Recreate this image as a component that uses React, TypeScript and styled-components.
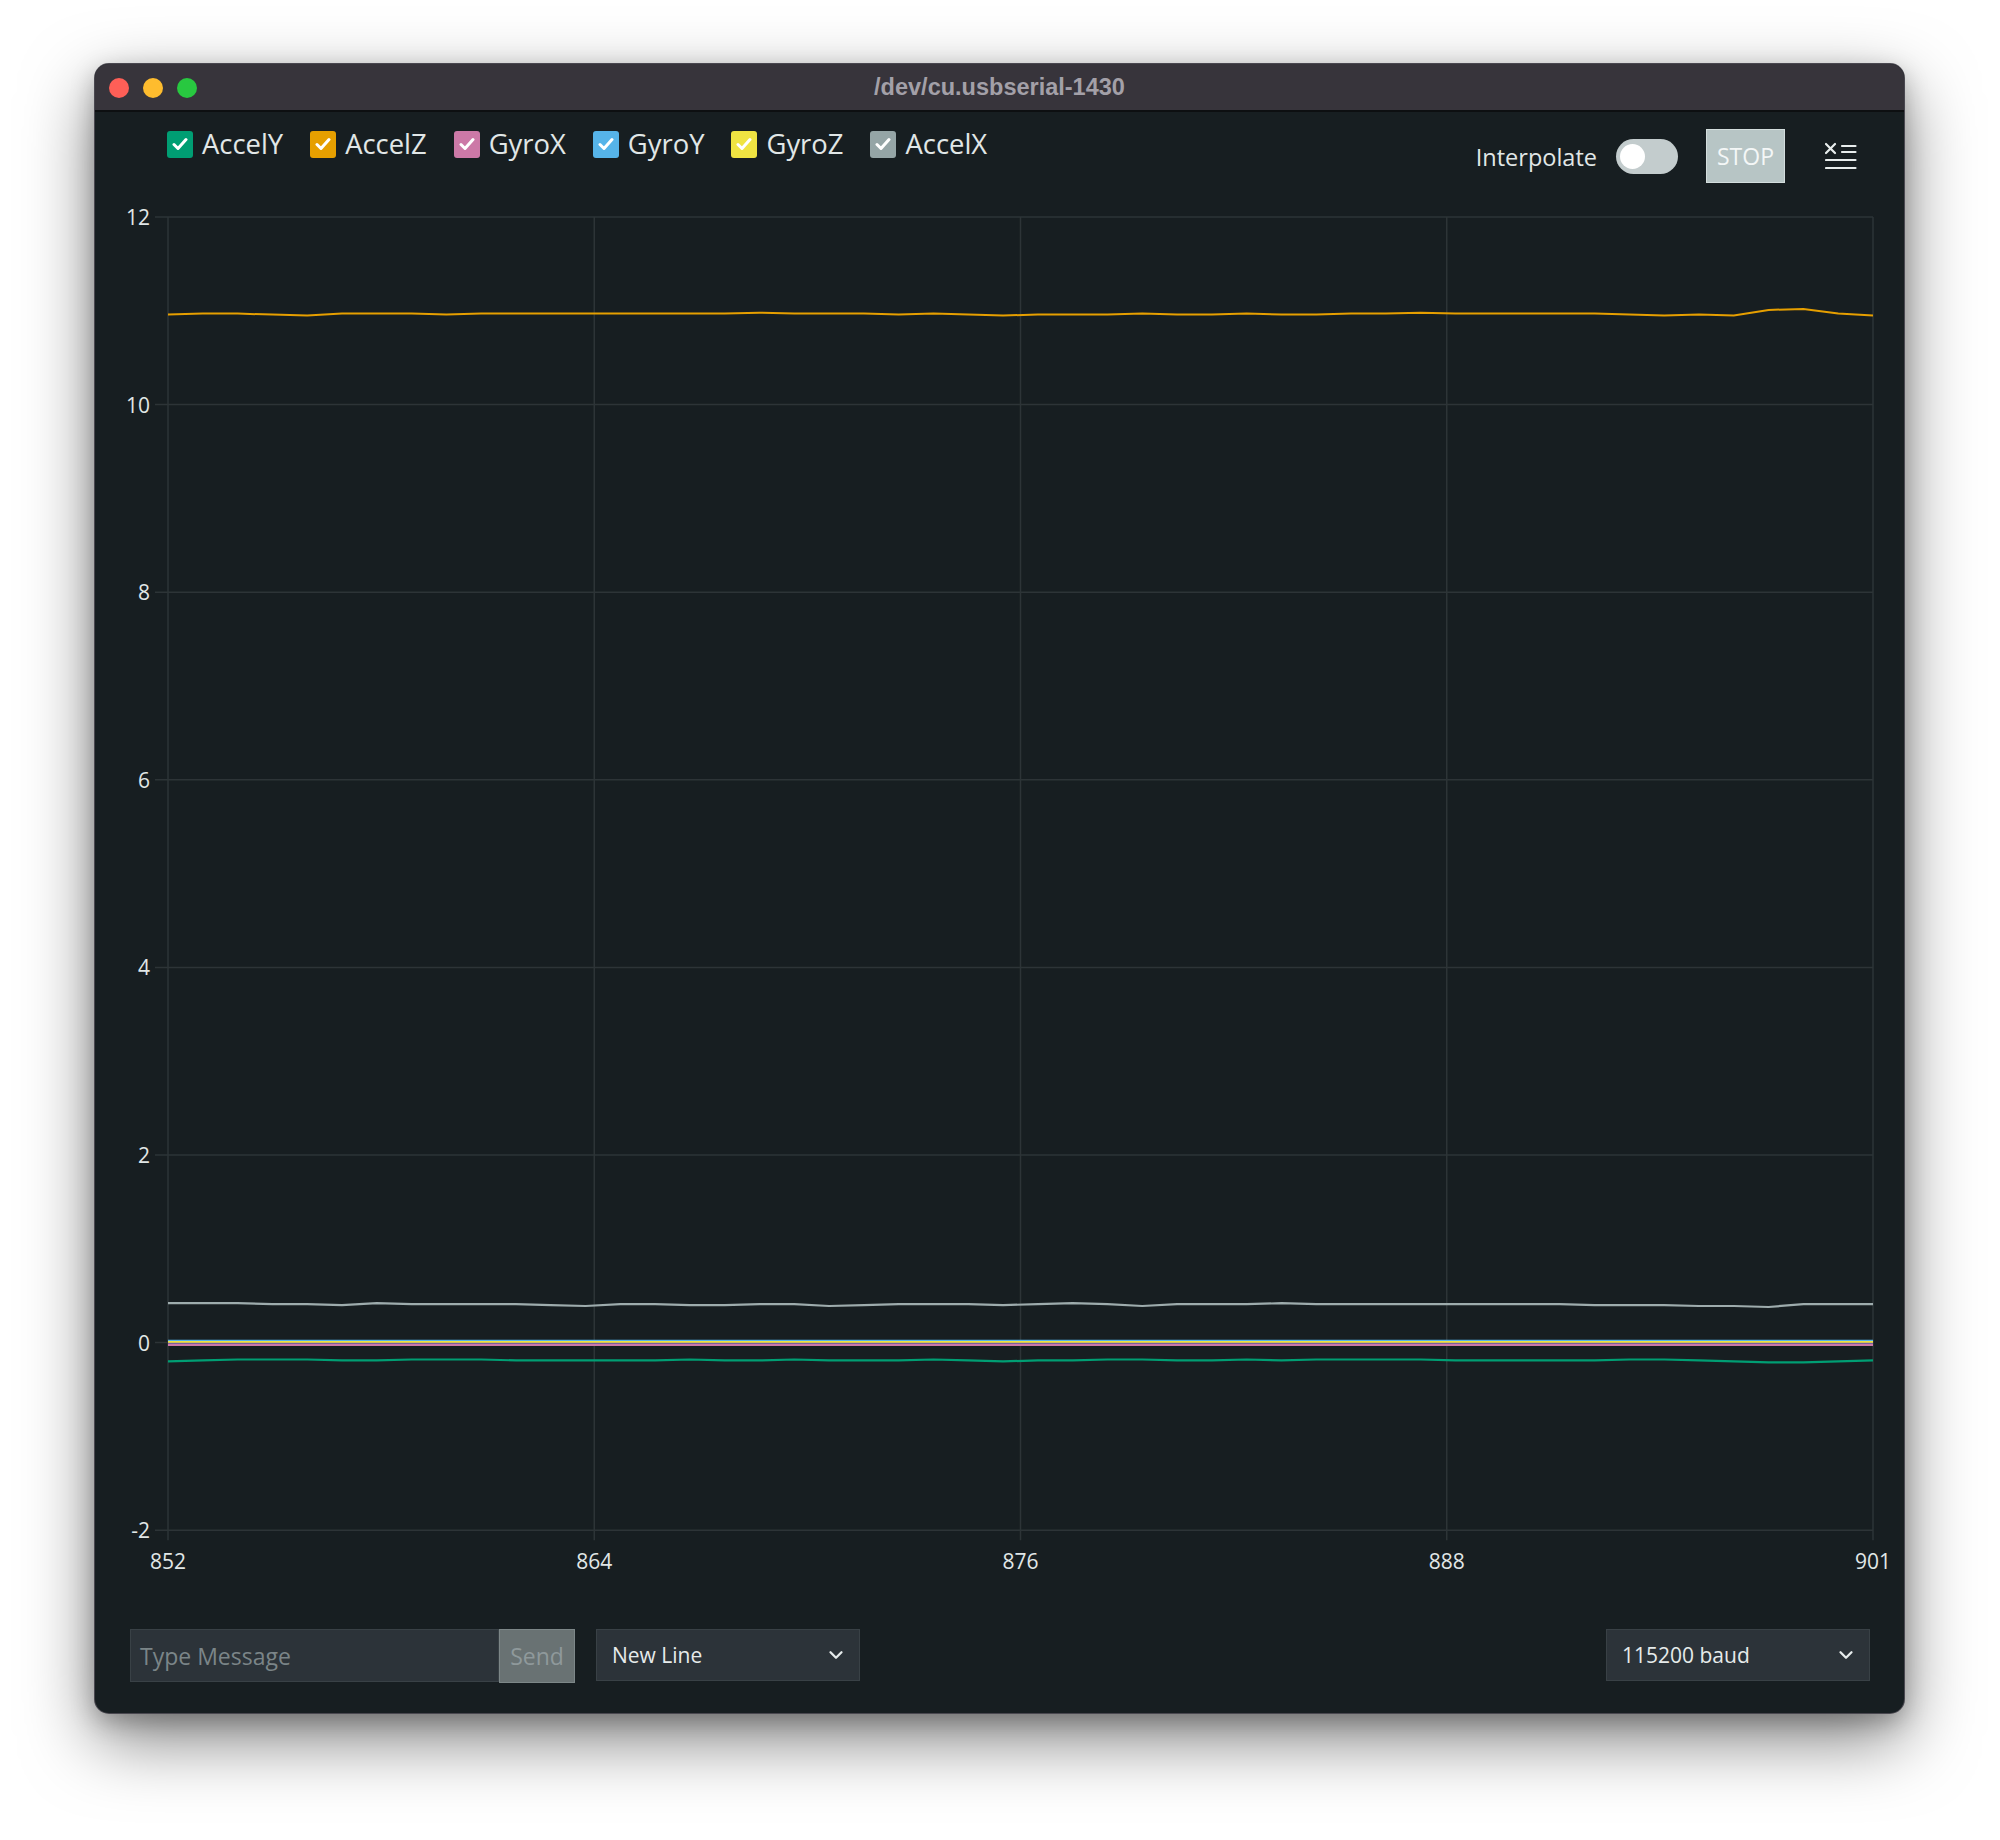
import React from "react";
import styled, { createGlobalStyle } from "styled-components";
import { ChevronDown } from "lucide-react";

const GlobalStyle = createGlobalStyle`
  html, body {
    margin: 0;
    padding: 0;
    background: #ffffff;
  }
  body {
    width: 2000px;
    height: 1840px;
    overflow: hidden;
    font-family: "Open Sans", "Noto Sans", sans-serif;
  }
`;

const Page = styled.div`
  padding: 64px 0 0 95px;
`;

const Window = styled.div`
  width: 1809px;
  height: 1649px;
  border-radius: 14px;
  overflow: hidden;
  display: flex;
  flex-direction: column;
  background: #171e21;
  box-shadow: 0 0 0 1px #4a4850, 0 26px 70px rgba(0, 0, 0, 0.5),
    0 8px 24px rgba(0, 0, 0, 0.25);
`;

const TitleBar = styled.div`
  position: relative;
  height: 46px;
  flex-shrink: 0;
  display: flex;
  align-items: center;
  justify-content: center;
  background: #37343b;
  border-bottom: 2px solid #0d0f11;
`;

const Lights = styled.div`
  position: absolute;
  left: 14px;
  top: 14px;
  display: flex;
  gap: 14px;
`;

const Light = styled.span<{ $color: string }>`
  width: 20px;
  height: 20px;
  border-radius: 50%;
  background: ${(p) => p.$color};
`;

const Title = styled.div`
  font-family: "Liberation Sans", Arial, sans-serif;
  font-weight: 700;
  font-size: 23.5px;
  color: #a3a0a8;
`;

const Header = styled.div`
  height: 88px;
  flex-shrink: 0;
  display: flex;
  justify-content: space-between;
  align-items: flex-start;
  padding: 0 47px 0 72px;
`;

const Legend = styled.div`
  display: flex;
  gap: 27px;
  margin-top: 17px;
`;

const LegendItem = styled.label`
  display: flex;
  align-items: center;
  gap: 9px;
  font-size: 27.4px;
  color: #e1e7e7;
  line-height: 30px;
`;

const Box = styled.span<{ $color: string }>`
  width: 26px;
  height: 27px;
  border-radius: 3px;
  background: ${(p) => p.$color};
  display: flex;
  align-items: center;
  justify-content: center;
`;

const Controls = styled.div`
  display: flex;
  align-items: center;
  margin-top: 17px;
`;

const ControlLabel = styled.span`
  font-size: 23.5px;
  color: #e1e7e7;
  margin-right: 19px;
  padding-top: 2px;
`;

const Toggle = styled.span`
  width: 62px;
  height: 35px;
  border-radius: 18px;
  background: #c3cccd;
  display: flex;
  align-items: center;
  padding-left: 4px;
  box-sizing: border-box;
  margin-right: 28px;
`;

const Knob = styled.span`
  width: 25px;
  height: 25px;
  border-radius: 50%;
  background: #ffffff;
`;

const StopButton = styled.button`
  width: 79px;
  height: 54px;
  border: 1px solid #d3dddd;
  background: #b7c5c5;
  color: #f4f7f7;
  font-family: "Open Sans", sans-serif;
  font-size: 23px;
  padding: 0;
  margin-right: 40px;
`;

const ChartWrap = styled.div`
  height: 1400px;
  flex-shrink: 0;
`;

const Footer = styled.div`
  flex: 1;
  display: flex;
  align-items: flex-start;
  padding: 29px 34px 0 35px;
`;

const MessageInput = styled.div`
  width: 369px;
  height: 53px;
  box-sizing: border-box;
  background: #2c3339;
  border: 1px solid #394146;
  display: flex;
  align-items: center;
  padding-left: 9px;
  font-size: 23px;
  color: #7b8588;
`;

const SendButton = styled.div`
  width: 76px;
  height: 54px;
  box-sizing: border-box;
  background: #697273;
  border: 1px solid #7d8788;
  display: flex;
  align-items: center;
  justify-content: center;
  font-size: 23px;
  color: #8f999b;
  margin-right: 21px;
`;

const Select = styled.div<{ $push?: boolean }>`
  width: 264px;
  height: 52px;
  box-sizing: border-box;
  background: #2c3339;
  border: 1px solid #394146;
  display: flex;
  align-items: center;
  justify-content: space-between;
  padding: 0 12px 0 15px;
  font-size: 21px;
  color: #e6ebeb;
  margin-left: ${(p) => (p.$push ? "auto" : "0")};
`;

const series = [
  { name: "AccelY", color: "#009e73" },
  { name: "AccelZ", color: "#e69f00" },
  { name: "GyroX", color: "#cc79a7" },
  { name: "GyroY", color: "#56b4e9" },
  { name: "GyroZ", color: "#f0e442" },
  { name: "AccelX", color: "#95a5a6" },
];

// plot geometry (svg coordinates, origin at window left / chart top)
const L = 73;
const R = 1778;
const T = 17;
const STEP = 187.6;
const yOf = (v: number) => T + (12 - v) * (STEP / 2);

const accelZ = [
  10.96, 10.97, 10.97, 10.96, 10.95, 10.97, 10.97, 10.97, 10.96, 10.97,
  10.97, 10.97, 10.97, 10.97, 10.97, 10.97, 10.97, 10.98, 10.97, 10.97,
  10.97, 10.96, 10.97, 10.96, 10.95, 10.96, 10.96, 10.96, 10.97, 10.96,
  10.96, 10.97, 10.96, 10.96, 10.97, 10.97, 10.98, 10.97, 10.97, 10.97,
  10.97, 10.97, 10.96, 10.95, 10.96, 10.95, 11.01, 11.02, 10.97, 10.95,
];
const accelX = [
  0.42, 0.42, 0.42, 0.41, 0.41, 0.4, 0.42, 0.41, 0.41, 0.41,
  0.41, 0.4, 0.39, 0.41, 0.41, 0.4, 0.4, 0.41, 0.41, 0.39,
  0.4, 0.41, 0.41, 0.41, 0.4, 0.41, 0.42, 0.41, 0.39, 0.41,
  0.41, 0.41, 0.42, 0.41, 0.41, 0.41, 0.41, 0.41, 0.41, 0.41,
  0.41, 0.4, 0.4, 0.4, 0.39, 0.39, 0.38, 0.41, 0.41, 0.41,
];
const accelY = [
  -0.2, -0.19, -0.18, -0.18, -0.18, -0.19, -0.19, -0.18, -0.18, -0.18,
  -0.19, -0.19, -0.19, -0.19, -0.19, -0.18, -0.19, -0.19, -0.18, -0.19,
  -0.19, -0.19, -0.18, -0.19, -0.2, -0.19, -0.19, -0.18, -0.18, -0.19,
  -0.19, -0.18, -0.19, -0.18, -0.18, -0.18, -0.18, -0.19, -0.19, -0.19,
  -0.19, -0.19, -0.18, -0.18, -0.19, -0.2, -0.21, -0.21, -0.2, -0.19,
];
const flat = (v: number) => accelZ.map(() => v);

const toPoints = (data: number[]) =>
  data
    .map((v, i) => `${(L + (i * (R - L)) / (data.length - 1)).toFixed(1)},${yOf(v).toFixed(1)}`)
    .join(" ");

const Chart = () => {
  const yTicks = [12, 10, 8, 6, 4, 2, 0, -2];
  const xTicks = ["852", "864", "876", "888", "901"];
  const B = yOf(-2);
  return (
    <svg width="1809" height="1400" viewBox="0 0 1809 1400">
      {yTicks.map((t) => (
        <g key={t}>
          <line x1={60} x2={R} y1={yOf(t)} y2={yOf(t)} stroke="#2d3437" strokeWidth="1.5" />
          <text
            x={55}
            y={yOf(t)}
            textAnchor="end"
            dominantBaseline="central"
            fontFamily="Open Sans, sans-serif"
            fontSize="21"
            fill="#e1e7e7"
          >
            {t}
          </text>
        </g>
      ))}
      {xTicks.map((t, i) => {
        const x = L + (i * (R - L)) / 4;
        return (
          <g key={t}>
            <line x1={x} x2={x} y1={T} y2={B + 10} stroke="#2d3437" strokeWidth="1.5" />
            <text
              x={x}
              y={B + 31}
              textAnchor="middle"
              dominantBaseline="central"
              fontFamily="Open Sans, sans-serif"
              fontSize="21"
              fill="#e1e7e7"
            >
              {t}
            </text>
          </g>
        );
      })}
      <polyline points={toPoints(accelZ)} fill="none" stroke="#e69f00" strokeWidth="2" />
      <polyline points={toPoints(accelX)} fill="none" stroke="#9eacad" strokeWidth="2.2" />
      <polyline points={toPoints(flat(0.02))} fill="none" stroke="#56b4e9" strokeWidth="2" />
      <polyline points={toPoints(flat(0.005))} fill="none" stroke="#f0e442" strokeWidth="2" />
      <polyline points={toPoints(flat(-0.01))} fill="none" stroke="#7a5fa0" strokeWidth="1.5" />
      <polyline points={toPoints(flat(-0.025))} fill="none" stroke="#cc79a7" strokeWidth="2" />
      <polyline points={toPoints(accelY)} fill="none" stroke="#009e73" strokeWidth="2.2" />
    </svg>
  );
};

const Check = () => (
  <svg width="16" height="14" viewBox="0 0 16 14">
    <path d="M2 7.5 L6 11.5 L14 2.5" fill="none" stroke="#ffffff" strokeWidth="3" strokeLinecap="round" strokeLinejoin="round" />
  </svg>
);

const MenuIcon = () => (
  <svg width="32" height="28" viewBox="0 0 32 28">
    <g stroke="#e8eded" strokeWidth="2.2" strokeLinecap="round">
      <path d="M1 2 L10 11 M10 2 L1 11" />
      <path d="M17 4 H30.5 M17 10 H30.5" />
      <path d="M1 18 H30.5 M1 26 H30.5" />
    </g>
  </svg>
);

const App = () => (
  <>
    <GlobalStyle />
    <Page>
      <Window>
        <TitleBar>
          <Lights>
            <Light $color="#fe5f57" />
            <Light $color="#febc2e" />
            <Light $color="#28c840" />
          </Lights>
          <Title>/dev/cu.usbserial-1430</Title>
        </TitleBar>
        <Header>
          <Legend>
            {series.map((s) => (
              <LegendItem key={s.name}>
                <Box $color={s.color}>
                  <Check />
                </Box>
                {s.name}
              </LegendItem>
            ))}
          </Legend>
          <Controls>
            <ControlLabel>Interpolate</ControlLabel>
            <Toggle>
              <Knob />
            </Toggle>
            <StopButton>STOP</StopButton>
            <MenuIcon />
          </Controls>
        </Header>
        <ChartWrap>
          <Chart />
        </ChartWrap>
        <Footer>
          <MessageInput>Type Message</MessageInput>
          <SendButton>Send</SendButton>
          <Select>
            New Line
            <ChevronDown size={22} strokeWidth={2.5} color="#e6ebeb" />
          </Select>
          <Select $push>
            115200 baud
            <ChevronDown size={22} strokeWidth={2.5} color="#e6ebeb" />
          </Select>
        </Footer>
      </Window>
    </Page>
  </>
);

export default App;
